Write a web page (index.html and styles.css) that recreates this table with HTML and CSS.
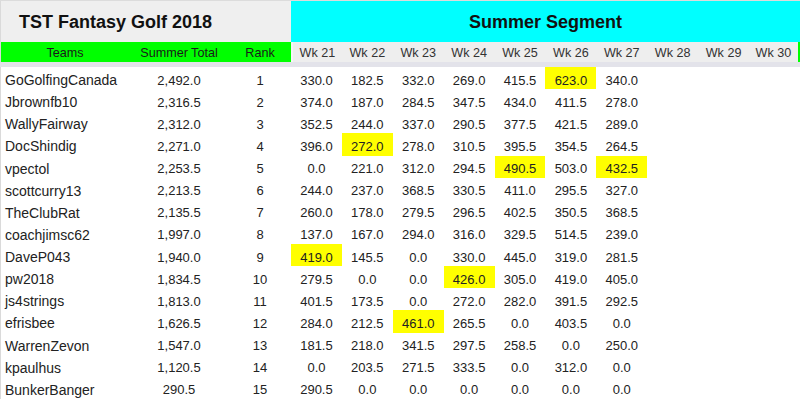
FILE: index.html
```html
<!DOCTYPE html>
<html>
<head>
<meta charset="utf-8">
<link rel="stylesheet" href="styles.css">
</head>
<body>
<div class="sheet">
  <div class="strip"></div>
  <div class="row title-row">
    <div class="title">TST Fantasy Golf 2018</div>
    <div class="segment">Summer Segment</div>
  </div>
  <div class="row head-row">
    <div class="hc green left">Teams</div>
    <div class="hc green">Summer Total</div>
    <div class="hc green">Rank</div>
    <div class="hc wk first">Wk 21</div>
    <div class="hc wk">Wk 22</div>
    <div class="hc wk">Wk 23</div>
    <div class="hc wk">Wk 24</div>
    <div class="hc wk">Wk 25</div>
    <div class="hc wk">Wk 26</div>
    <div class="hc wk">Wk 27</div>
    <div class="hc wk">Wk 28</div>
    <div class="hc wk">Wk 29</div>
    <div class="hc wk last">Wk 30</div>
  </div>
  <div class="sep"></div>
  <div class="body" id="body"></div>
</div>
<script src="app.js"></script>
</body>
</html>
```

FILE: app.js
```js
const data = [
  ["GoGolfingCanada","2,492.0","1",["330.0","182.5","332.0","269.0","415.5","*623.0","340.0"]],
  ["Jbrownfb10","2,316.5","2",["374.0","187.0","284.5","347.5","434.0","411.5","278.0"]],
  ["WallyFairway","2,312.0","3",["352.5","244.0","337.0","290.5","377.5","421.5","289.0"]],
  ["DocShindig","2,271.0","4",["396.0","*272.0","278.0","310.5","395.5","354.5","264.5"]],
  ["vpectol","2,253.5","5",["0.0","221.0","312.0","294.5","*490.5","503.0","*432.5"]],
  ["scottcurry13","2,213.5","6",["244.0","237.0","368.5","330.5","411.0","295.5","327.0"]],
  ["TheClubRat","2,135.5","7",["260.0","178.0","279.5","296.5","402.5","350.5","368.5"]],
  ["coachjimsc62","1,997.0","8",["137.0","167.0","294.0","316.0","329.5","514.5","239.0"]],
  ["DaveP043","1,940.0","9",["*419.0","145.5","0.0","330.0","445.0","319.0","281.5"]],
  ["pw2018","1,834.5","10",["279.5","0.0","0.0","*426.0","305.0","419.0","405.0"]],
  ["js4strings","1,813.0","11",["401.5","173.5","0.0","272.0","282.0","391.5","292.5"]],
  ["efrisbee","1,626.5","12",["284.0","212.5","*461.0","265.5","0.0","403.5","0.0"]],
  ["WarrenZevon","1,547.0","13",["181.5","218.0","341.5","297.5","258.5","0.0","250.0"]],
  ["kpaulhus","1,120.5","14",["0.0","203.5","271.5","333.5","0.0","312.0","0.0"]],
  ["BunkerBanger","290.5","15",["290.5","0.0","0.0","0.0","0.0","0.0","0.0"]]
];
const body = document.getElementById("body");
function cell(text, cls) {
  const d = document.createElement("div");
  d.className = "c " + cls;
  d.textContent = text;
  body.appendChild(d);
}
data.forEach(r => {
  cell(r[0], "team");
  cell(r[1], "num");
  cell(r[2], "num");
  for (let i = 0; i < 10; i++) {
    let v = r[3][i] || "";
    let cls = "num";
    if (v.startsWith("*")) { v = v.slice(1); cls += " hl"; }
    cell(v, cls);
  }
});
```

FILE: styles.css
```css
html, body {
  margin: 0;
  padding: 0;
  background: #ffffff;
}
.sheet {
  width: 800px;
  font-family: "Liberation Sans", Arial, sans-serif;
  color: #222222;
}
.strip {
  height: 1px;
  background: #dcdcdc;
}
.row {
  display: grid;
  grid-template-columns: 129px 100px 62px repeat(10, 50.9px);
}
.title-row {
  height: 41px;
}
.title {
  grid-column: 1 / 4;
  background: #efefef;
  font-weight: bold;
  font-size: 18px;
  color: #111111;
  padding-left: 18px;
  display: flex;
  align-items: center;
  padding-top: 1px;
  border-left: 1px solid #dadada;
}
.segment {
  grid-column: 4 / 14;
  background: #00ffff;
  font-weight: bold;
  font-size: 18px;
  color: #111111;
  display: flex;
  align-items: center;
  justify-content: center;
  padding-top: 1px;
}
.head-row {
  height: 20px;
}
.hc {
  font-size: 12.6px;
  display: flex;
  align-items: center;
  justify-content: center;
  padding-top: 2px;
  box-sizing: border-box;
}
.green {
  background: #00ff00;
  color: #1a1a1a;
}
.green.left {
  border-left: 1px solid #dadada;
}
.wk {
  background: #eeeeee;
  color: #333333;
}
.wk.first {
  border-left: 2px solid #f6f6f6;
}
.wk.last {
  border-right: 2px solid #00ff00;
}
.sep {
  height: 5px;
  background: #e3e3ea;
}
.body {
  display: grid;
  grid-template-columns: 129px 100px 62px repeat(10, 50.9px);
  grid-auto-rows: 22.14px;
  box-shadow: inset 1px 0 #dadada;
}
.c {
  font-size: 13px;
  display: flex;
  align-items: center;
  padding-top: 4px;
  box-sizing: border-box;
}
.team {
  padding-left: 5px;
  font-size: 14px;
}
.num {
  justify-content: center;
}
.hl {
  background: #ffff00;
}
```
